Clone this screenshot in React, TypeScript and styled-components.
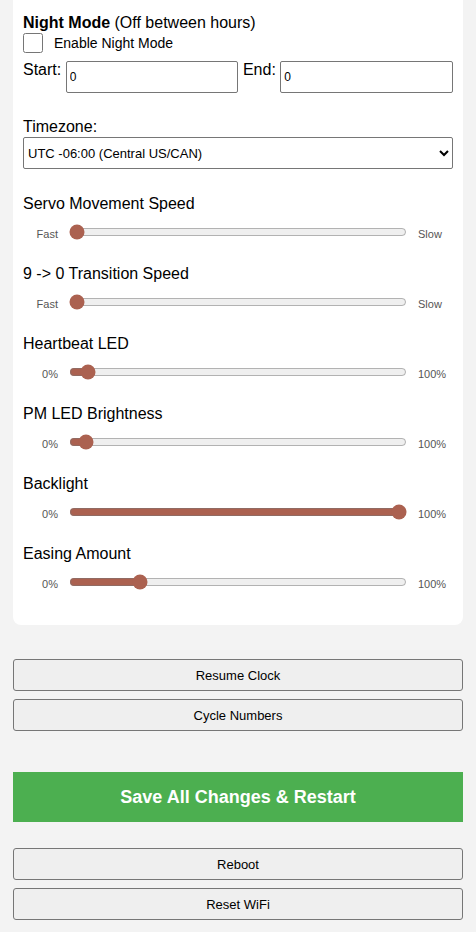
import { useState } from "react";
import styled, { createGlobalStyle } from "styled-components";

const GlobalStyle = createGlobalStyle`
    body {
        margin: 0;
        background: #f3f3f3;
        font-family: "Liberation Sans", Arial, sans-serif;
        color: #000;
    }
`;

const StyledPage = styled.div`
    padding: 0 13px 12px;
`;

const StyledCard = styled.div`
    background: #fff;
    border-radius: 0 0 8px 8px;
    padding: 14px 10px 11px;
`;

const StyledTitle = styled.div`
    font-size: 16px;
    line-height: 18px;
`;

const StyledCheckRow = styled.label`
    display: flex;
    align-items: center;
    gap: 11px;
    margin-top: 1px;
    font-size: 14px;
    height: 20px;
`;

const StyledCheckbox = styled.input`
    width: 20px;
    height: 20px;
    margin: 0;
`;

const StyledHoursRow = styled.div`
    display: flex;
    align-items: flex-start;
    gap: 4.5px;
    margin-top: 8px;
`;

const StyledFieldLabel = styled.label`
    font-size: 16px;
    line-height: 18px;
`;

const StyledTextInput = styled.input`
    flex: 1;
    min-width: 0;
    height: 32px;
    box-sizing: border-box;
    margin: 0;
    border: 1px solid #767676;
    border-radius: 2px;
    padding: 1px 3px;
    font-size: 12px;
    font-family: "Liberation Sans", Arial, sans-serif;
`;

const StyledBlockLabel = styled.div<{ $top: number }>`
    font-size: 16px;
    line-height: 18px;
    margin-top: ${(p) => p.$top}px;
`;

const StyledSelect = styled.select`
    display: block;
    width: 100%;
    height: 32px;
    margin-top: 1px;
    border: 1px solid #767676;
    border-radius: 2px;
    background: #fff;
    font-size: 13px;
    font-family: "Liberation Sans", Arial, sans-serif;
    color: #000;
`;

const StyledSliderRow = styled.div`
    display: flex;
    align-items: center;
    gap: 11px;
    height: 20px;
    margin-top: 9px;
`;

const StyledEndLabel = styled.span<{ $side: "left" | "right" }>`
    width: 35px;
    flex-shrink: 0;
    padding-top: 4px;
    font-size: 11px;
    color: #555;
    text-align: ${(p) => p.$side};
`;

const StyledRange = styled.input`
    flex: 1;
    min-width: 0;
    margin: 0;
    accent-color: #ab6150;
`;

const StyledButton = styled.button<{ $top: number }>`
    display: block;
    width: 100%;
    height: 32px;
    margin-top: ${(p) => p.$top}px;
    background: #efefef;
    border: 1px solid #767676;
    border-radius: 3px;
    font-size: 13px;
    font-family: "Liberation Sans", Arial, sans-serif;
    color: #000;
`;

const StyledSaveButton = styled.button`
    display: block;
    width: 100%;
    height: 50px;
    margin-top: 41px;
    background: #4caf50;
    border: none;
    color: #fff;
    font-size: 18px;
    font-weight: bold;
    font-family: "Liberation Sans", Arial, sans-serif;
`;

type SliderDef = {
    label: string;
    min: string;
    max: string;
    value: number;
};

const sliders: SliderDef[] = [
    { label: "Servo Movement Speed", min: "Fast", max: "Slow", value: 0 },
    { label: "9 -> 0 Transition Speed", min: "Fast", max: "Slow", value: 0 },
    { label: "Heartbeat LED", min: "0%", max: "100%", value: 33 },
    { label: "PM LED Brightness", min: "0%", max: "100%", value: 27 },
    { label: "Backlight", min: "0%", max: "100%", value: 1000 },
    { label: "Easing Amount", min: "0%", max: "100%", value: 196 },
];

export default function App() {
    const [values, setValues] = useState(sliders.map((s) => s.value));
    const [start, setStart] = useState("0");
    const [end, setEnd] = useState("0");

    function setValue(i: number, v: number) {
        setValues((prev) => prev.map((x, j) => (j === i ? v : x)));
    }

    return (
        <>
            <GlobalStyle />
            <StyledPage>
                <StyledCard>
                    <StyledTitle>
                        <b>Night Mode</b> (Off between hours)
                    </StyledTitle>
                    <StyledCheckRow>
                        <StyledCheckbox type="checkbox" />
                        Enable Night Mode
                    </StyledCheckRow>
                    <StyledHoursRow>
                        <StyledFieldLabel htmlFor="start">Start:</StyledFieldLabel>
                        <StyledTextInput id="start" value={start} onChange={(e) => setStart(e.target.value)} />
                        <StyledFieldLabel htmlFor="end">End:</StyledFieldLabel>
                        <StyledTextInput id="end" value={end} onChange={(e) => setEnd(e.target.value)} />
                    </StyledHoursRow>

                    <StyledBlockLabel $top={25}>Timezone:</StyledBlockLabel>
                    <StyledSelect defaultValue="-6">
                        <option value="-8">UTC -08:00 (Pacific US/CAN)</option>
                        <option value="-7">UTC -07:00 (Mountain US/CAN)</option>
                        <option value="-6">UTC -06:00 (Central US/CAN)</option>
                        <option value="-5">UTC -05:00 (Eastern US/CAN)</option>
                    </StyledSelect>

                    {sliders.map((s, i) => (
                        <div key={s.label}>
                            <StyledBlockLabel $top={i === 0 ? 26 : 23}>{s.label}</StyledBlockLabel>
                            <StyledSliderRow>
                                <StyledEndLabel $side="right">{s.min}</StyledEndLabel>
                                <StyledRange
                                    type="range"
                                    min={0}
                                    max={1000}
                                    value={values[i]}
                                    onChange={(e) => setValue(i, Number(e.target.value))}
                                />
                                <StyledEndLabel $side="left">{s.max}</StyledEndLabel>
                            </StyledSliderRow>
                        </div>
                    ))}
                    <div style={{ height: 22 }} />
                </StyledCard>

                <StyledButton $top={34}>Resume Clock</StyledButton>
                <StyledButton $top={8}>Cycle Numbers</StyledButton>
                <StyledSaveButton>Save All Changes &amp; Restart</StyledSaveButton>
                <StyledButton $top={26}>Reboot</StyledButton>
                <StyledButton $top={8}>Reset WiFi</StyledButton>
            </StyledPage>
        </>
    );
}
